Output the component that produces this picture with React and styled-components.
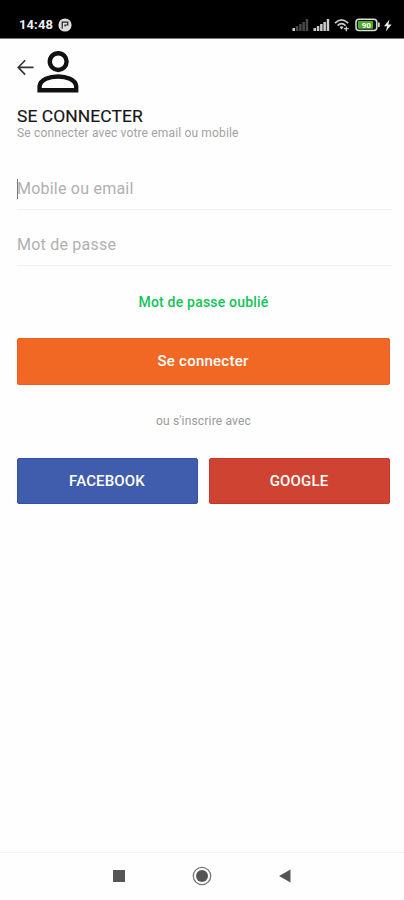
import React from 'react';
import styled, { createGlobalStyle } from 'styled-components';

const GlobalStyle = createGlobalStyle`
    * {
        box-sizing: border-box;
    }
    body {
        margin: 0;
        background: #fefefe;
        font-family: Roboto, sans-serif;
    }
`
const Screen = styled.div`
    display: flex;
    flex-direction: column;
    width: 100%;
    height: 900px;
    overflow: hidden;
`
const StatusBar = styled.div`
    display: flex;
    justify-content: space-between;
    height: 39px;
    padding: 11px 12px 0 19px;
    background: #000;
    border-bottom: 1px solid #777;
`
const StatusGroup = styled.div`
    display: flex;
    align-items: center;
    height: 28px;
    gap: ${({gap}) => gap};
`
const Clock = styled.span`
    color: #eee;
    font-size: 13px;
    font-weight: 700;
    line-height: 28px;
    letter-spacing: 0.1px;
`
const Content = styled.main`
    flex: 1;
    padding: 10px 12px 0 17px;
`
const Header = styled.div`
    display: flex;
    height: 46px;
`
const BackIcon = styled.svg`
    margin: 10px 3px 0 0;
`
const Title = styled.h1`
    margin: 10px 0 0;
    color: #161616;
    font-size: 17.4px;
    font-weight: 400;
    line-height: 22px;
    letter-spacing: 0.1px;
    -webkit-text-stroke: 0.2px #161616;
`
const Subtitle = styled.p`
    margin: 0;
    color: #a2a2a2;
    font-size: 12px;
    line-height: 13px;
    letter-spacing: 0.16px;
`
const Field = styled.div`
    display: flex;
    align-items: center;
    height: 42px;
    margin-top: ${({top}) => top};
    border-bottom: 1px solid #f2f2f2;
`
const Cursor = styled.i`
    width: 1px;
    height: 20px;
    margin-right: -1px;
    background: #777;
`
const Placeholder = styled.span`
    color: #b0b0b0;
    font-size: 16px;
    line-height: 20px;
    letter-spacing: 0.22px;
`
const Forgot = styled.p`
    margin: 27px 0 0;
    padding-right: 2px;
    color: #12c457;
    font-size: 14px;
    font-weight: 500;
    line-height: 18px;
    letter-spacing: 0.2px;
    text-align: center;
`
const Button = styled.button`
    flex: 1;
    height: ${({height}) => height || '46px'};
    padding: 0 1px 1px 0;
    border: 1px solid ${({edge}) => edge};
    border-radius: 2px;
    color: #fff;
    background: ${({color}) => color};
    font-family: inherit;
    font-size: 15px;
    font-weight: 500;
    letter-spacing: ${({spacing}) => spacing || '0.15px'};
`
const ButtonRow = styled.div`
    display: flex;
    gap: 11px;
    margin: ${({top}) => top} 2px 0 0;
`
const OrText = styled.p`
    margin: 28px 0 0;
    padding-right: 2px;
    color: #999;
    font-size: 12px;
    line-height: 17px;
    letter-spacing: 0.18px;
    text-align: center;
`
const NavBar = styled.nav`
    display: flex;
    justify-content: center;
    align-items: center;
    gap: 67px;
    height: 48px;
    padding-bottom: 1px;
    border-top: 1px solid #f3f3f3;
`

const Signal = ({faded}) => (
    <svg width="17" height="14" viewBox="0 0 17 14">
        {[3, 5, 7, 9, 12].map((h, i) => (
            <rect key={i} x={0.5 + i * 3.3} y={13 - h} width="2.5" height={h} fill={faded && i > 0 ? '#484848' : '#ccc'} />
        ))}
    </svg>
)

const StatusIcons = () => (
    <StatusGroup gap="4px">
        <Signal faded />
        <Signal />
        <svg width="17" height="14" viewBox="0 0 18 14" fill="none" stroke="#ccc" strokeWidth="1.7">
            <path d="M1 5Q8 -2 15 5M3.8 7.6Q8 3.5 12.2 7.6" />
            <path d="M5.8 9.2Q8 7.4 10.2 9.2L8 11.8Z" fill="#ccc" stroke="none" />
            <path d="M10.5 10.8h5M13 8.5v5" strokeWidth="1.4" />
        </svg>
        <svg width="25" height="14" viewBox="0 0 25 14">
            <rect x="1" y="1.2" width="20.8" height="11.4" rx="3" fill="#111" stroke="#ddd" strokeWidth="1.5" />
            <rect x="3" y="3" width="15" height="7.8" rx="1" fill="#4fae28" />
            <rect x="23" y="4.5" width="1.7" height="4.5" fill="#ddd" />
            <text x="11.3" y="9.8" textAnchor="middle" fill="#fff" fontSize="8" fontWeight="700">90</text>
        </svg>
        <svg width="8" height="13" viewBox="0 0 8 13">
            <path d="M5.5 0.5L0 7.3h3.2L1.8 12.5L7.6 5.4H4.3Z" fill="#eee" />
        </svg>
    </StatusGroup>
)

const App = () => {
    return (
        <Screen>
            <GlobalStyle />
            <StatusBar>
                <StatusGroup gap="5px">
                    <Clock>14:48</Clock>
                    <svg width="14" height="14" viewBox="0 0 14 14">
                        <circle cx="7" cy="7" r="6.6" fill="#ddd" />
                        <path d="M4.2 10.8V4.2h5.6V7H7v1.5" fill="none" stroke="#222" strokeWidth="1.2" />
                    </svg>
                </StatusGroup>
                <StatusIcons />
            </StatusBar>
            <Content>
                <Header>
                    <BackIcon width="17" height="17" viewBox="0 0 17 17" fill="none" stroke="#333" strokeWidth="1.6">
                        <path d="M16.5 8.4H1.5M8.2 1.2L1.2 8.4L8.2 15.6" />
                    </BackIcon>
                    <svg width="42" height="45" viewBox="0 0 42 45" fill="none" stroke="#111" strokeWidth="4.4">
                        <circle cx="21.2" cy="12.6" r="8.4" />
                        <path d="M2.6 41.2V37C3.6 30.5 12.5 27.5 21 27.5S38.2 30.5 39.2 37V41.2Z" />
                    </svg>
                </Header>
                <Title>SE CONNECTER</Title>
                <Subtitle>Se connecter avec votre email ou mobile</Subtitle>
                <Field top="28px">
                    <Cursor />
                    <Placeholder>Mobile ou email</Placeholder>
                </Field>
                <Field top="14px">
                    <Placeholder>Mot de passe</Placeholder>
                </Field>
                <Forgot>Mot de passe oublié</Forgot>
                <ButtonRow top="27px">
                    <Button color="#f16724" edge="#ee5f1e" height="47px" spacing="0.25px">Se connecter</Button>
                </ButtonRow>
                <OrText>ou s'inscrire avec</OrText>
                <ButtonRow top="28px">
                    <Button color="#405cad" edge="#3551a8">FACEBOOK</Button>
                    <Button color="#cf4332" edge="#cb362b">GOOGLE</Button>
                </ButtonRow>
            </Content>
            <NavBar>
                <svg width="12" height="12" viewBox="0 0 12 12">
                    <rect width="12" height="12" fill="#555" />
                </svg>
                <svg width="20" height="20" viewBox="0 0 20 20">
                    <circle cx="10" cy="10" r="8.7" fill="none" stroke="#777" strokeWidth="1.3" />
                    <circle cx="10" cy="10" r="6" fill="#555" />
                </svg>
                <svg width="12" height="14" viewBox="0 0 12 14" >
                    <path d="M0 7L11.5 0.5V13.5Z" fill="#555" />
                </svg>
            </NavBar>
        </Screen>
    )
}

export default App;
